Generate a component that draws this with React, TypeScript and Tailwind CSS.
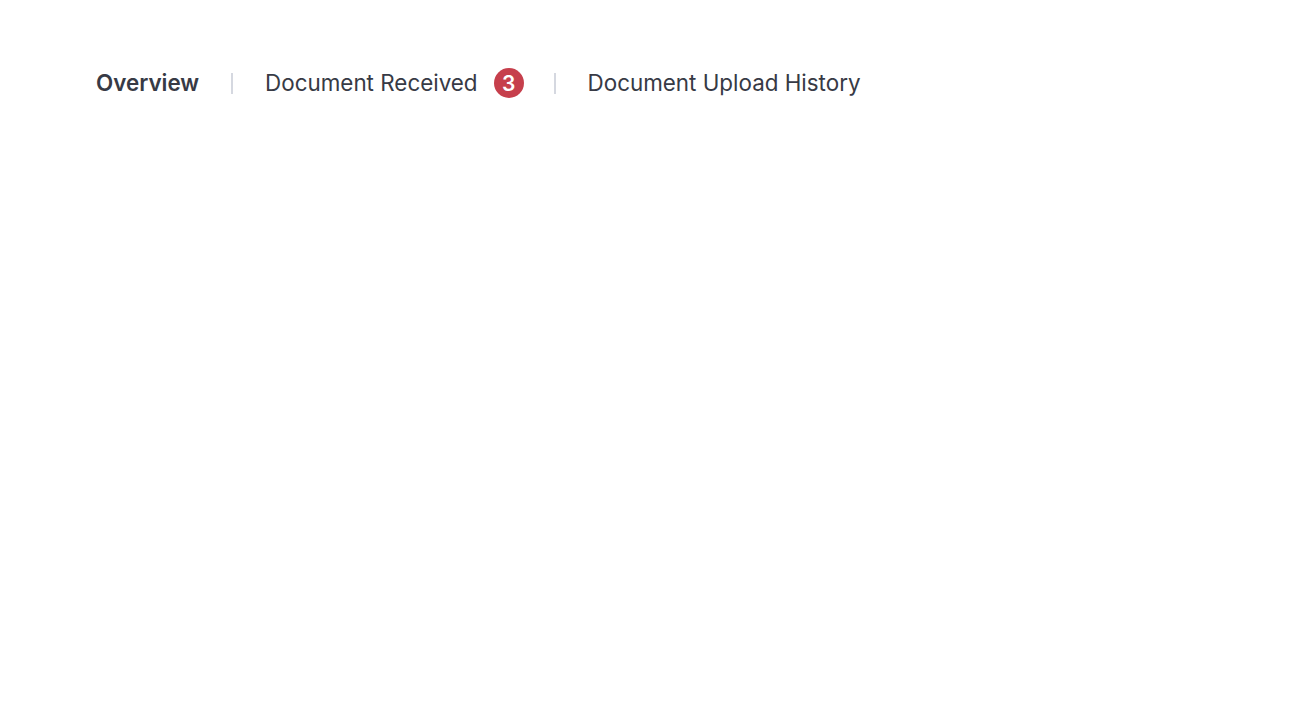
export default function App() {
  return (
    <div className="min-h-screen bg-white" style={{ fontFamily: "Inter, sans-serif" }}>
      <nav className="flex items-center pl-[96px] pt-[68px] text-[22.4px] leading-[28px] text-[#373a45]">
        <span className="font-semibold">Overview</span>
        <span className="ml-[32px] mr-[32px] h-[21px] w-[2px] bg-[#d5d8e0]" />
        <span className="flex items-center">
          Document Received
          <span className="ml-[16px] flex h-[30px] w-[30px] items-center justify-center rounded-full bg-[#c63f4c] text-[21px] font-semibold leading-none text-white">
            3
          </span>
        </span>
        <span className="ml-[30px] mr-[32px] h-[21px] w-[2px] bg-[#d5d8e0]" />
        <span>Document Upload History</span>
      </nav>
    </div>
  );
}
